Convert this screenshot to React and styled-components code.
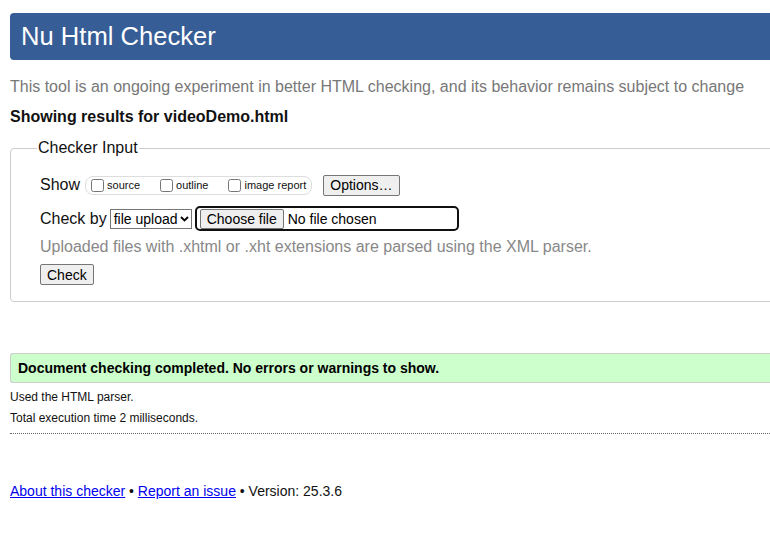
import React from "react";
import styled, { createGlobalStyle } from "styled-components";

const GlobalStyle = createGlobalStyle`
	html, body {
		margin: 0;
		padding: 0;
		background: #fff;
		overflow: hidden;
	}
	body {
		font-family: "Liberation Sans", Arial, sans-serif;
		color: #000;
	}
`;

const Page = styled.div`
	width: 800px;
	padding: 0 0 0 10px;
`;

const Title = styled.h1`
	margin: 13px 0 0;
	height: 47px;
	line-height: 47px;
	padding-left: 11px;
	font-size: 25.6px;
	font-weight: normal;
	color: #fff;
	background: #365d95;
	border-radius: 4px;
`;

const Intro = styled.p`
	margin: 17px 0 0;
	font-size: 16px;
	line-height: 20px;
	color: #777;
	white-space: nowrap;
`;

const Results = styled.p`
	margin: 10px 0 0;
	font-size: 16px;
	line-height: 20px;
	font-weight: bold;
	color: #111;
`;

const Fieldset = styled.fieldset`
	margin: 11px 0 0;
	padding: 16px 0 16px 29px;
	border: 1px solid #ccc;
	border-radius: 4px;
	min-width: 0;
`;

const Legend = styled.legend`
	margin-left: -3px;
	padding: 0 1px;
	font-size: 16px;
	line-height: 20px;
	color: #111;
`;

const Row = styled.div`
	display: flex;
	align-items: center;
	height: ${(p) => p.$h}px;
	margin-top: ${(p) => p.$mt || 0}px;
`;

const Label = styled.span`
	font-size: 16px;
	color: #111;
	margin-right: ${(p) => p.$gap}px;
`;

const ShowBox = styled.span`
	display: inline-flex;
	align-items: center;
	height: 17px;
	padding: 0 5px 0 5px;
	border: 1px solid #ddd;
	border-radius: 8px;
	margin-right: 11px;
`;

const Option = styled.label`
	display: inline-flex;
	align-items: center;
	font-size: 11px;
	color: #111;
	margin-right: ${(p) => p.$gap}px;

	input {
		margin: 0 3px 0 0;
		width: 13px;
		height: 13px;
	}
`;

const Button = styled.button`
	font-family: "Liberation Sans", Arial, sans-serif;
	font-size: 14px;
	line-height: 16px;
	height: ${(p) => p.$h || 21}px;
	padding: 0 ${(p) => p.$px || 6}px;
	background: #efefef;
	color: #000;
	border: 1px solid #767676;
	border-radius: 2px;
`;

const Select = styled.span`
	display: inline-flex;
	align-items: center;
	box-sizing: border-box;
	width: 82px;
	height: 20px;
	padding: 0 2px 0 3px;
	border: 1px solid #767676;
	font-size: 14px;
	color: #000;
	margin-right: 3px;
	white-space: nowrap;

	svg {
		margin-left: auto;
		flex: none;
	}
`;

const FileBox = styled.span`
	display: inline-flex;
	align-items: center;
	box-sizing: border-box;
	width: 264px;
	height: 25px;
	padding-left: 3px;
	border: 2px solid #101010;
	border-radius: 5px;
	font-size: 14px;
	color: #000;
	gap: 4px;
`;

const Help = styled.p`
	margin: 6px 0 0;
	font-size: 16px;
	line-height: 20px;
	color: #888;
`;

const Success = styled.div`
	margin-top: 51px;
	height: 28px;
	line-height: 28px;
	padding-left: 7px;
	background: #ccffcc;
	border: 1px solid #ccc;
	border-right: none;
	border-radius: 3px 0 0 3px;
	font-size: 14px;
	font-weight: bold;
	color: #000;
`;

const Detail = styled.p`
	margin: ${(p) => p.$mt}px 0 0;
	font-size: 12px;
	line-height: 16px;
	color: #111;
`;

const Rule = styled.hr`
	margin: 7px 0 0;
	border: none;
	border-top: 1px dotted #666;
	height: 0;
`;

const Footer = styled.p`
	margin: 48px 0 0;
	font-size: 14px;
	line-height: 18px;
	color: #111;

	a {
		color: #0000ee;
		text-decoration: underline;
	}
`;

const Chevron = () => (
	<svg width="9" height="6" viewBox="0 0 9 6" aria-hidden="true">
		<path d="M1 1 L4.5 4.5 L8 1" fill="none" stroke="#000" strokeWidth="1.8" />
	</svg>
);

export default function App() {
	return (
		<>
			<GlobalStyle />
			<Page>
				<Title>Nu Html Checker</Title>
				<Intro>
					This tool is an ongoing experiment in better HTML checking, and its behavior remains subject to change
				</Intro>
				<Results>Showing results for videoDemo.html</Results>
				<Fieldset>
					<Legend>Checker Input</Legend>
					<Row $h={22}>
						<Label $gap={5}>Show</Label>
						<ShowBox>
							<Option $gap={20}>
								<input type="checkbox" />
								source
							</Option>
							<Option $gap={20}>
								<input type="checkbox" />
								outline
							</Option>
							<Option $gap={0}>
								<input type="checkbox" />
								image report
							</Option>
						</ShowBox>
						<Button $px={6}>Options…</Button>
					</Row>
					<Row $h={25} $mt={10}>
						<Label $gap={3}>Check by</Label>
						<Select>
							file upload
							<Chevron />
						</Select>
						<FileBox>
							<Button $h={20} $px={6}>Choose file</Button>
							No file chosen
						</FileBox>
					</Row>
					<Help>Uploaded files with .xhtml or .xht extensions are parsed using the XML parser.</Help>
					<Row $h={21} $mt={7}>
						<Button>Check</Button>
					</Row>
				</Fieldset>
				<Success>Document checking completed. No errors or warnings to show.</Success>
				<Detail $mt={6}>Used the HTML parser.</Detail>
				<Detail $mt={5}>Total execution time 2 milliseconds.</Detail>
				<Rule />
				<Footer>
					<a href="#about">About this checker</a> • <a href="#issue">Report an issue</a> • Version: 25.3.6
				</Footer>
			</Page>
		</>
	);
}
